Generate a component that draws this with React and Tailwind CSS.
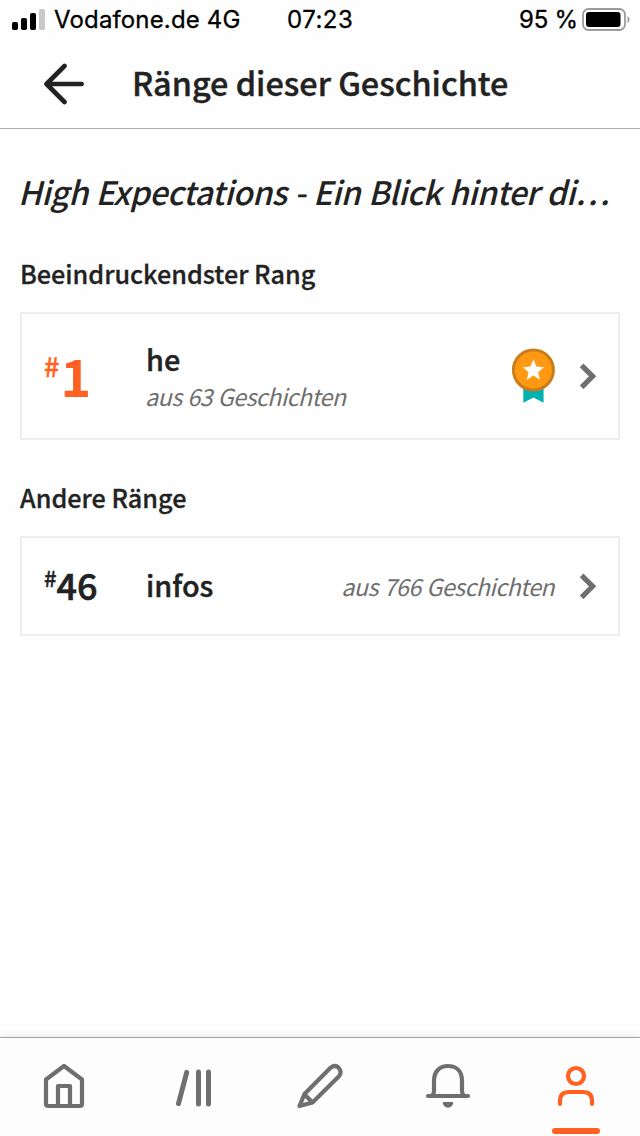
import React from 'react';

const Chevron = () => (
  <svg width="18" height="26" viewBox="0 0 18 26" fill="none" className="shrink-0">
    <path d="M2.6 2.3 L13.6 13.3 L2.6 24.3" stroke="#6f6f6f" strokeWidth="5.2" />
  </svg>
);

const Medal = () => (
  <svg width="44" height="56" viewBox="0 0 44 56" className="shrink-0">
    <path d="M12.3 36h20.3v18.8l-10.2-5.4-10.1 5.4z" fill="#00b2b2" />
    <circle cx="22.4" cy="22" r="20" fill="#ff9912" stroke="#c97e1b" strokeWidth="3" />
    <path
      d="M22.4 11.3l3 7.3 7.6.6-5.8 5 1.8 7.5-6.6-4.1-6.6 4.1 1.8-7.5-5.8-5 7.6-.6z"
      fill="#fff"
    />
  </svg>
);

const StatusBar = () => (
  <div className="flex h-10 items-center pl-3 pr-2.5 font-['Inter',sans-serif] text-[24px] leading-none text-black [-webkit-text-stroke:0.3px]">
    <svg width="34" height="22" viewBox="0 0 34 22" className="shrink-0">
      <rect x="0" y="13" width="6" height="8" rx="1.8" />
      <rect x="9" y="9" width="6" height="12" rx="1.8" />
      <rect x="18" y="4" width="6" height="17" rx="1.8" />
      <rect x="27" y="0" width="6" height="21" rx="1.8" fill="#c9c9c9" />
    </svg>
    <span className="ml-2 w-[233px] whitespace-nowrap tracking-[0.15px]">Vodafone.de 4G</span>
    <span className="w-[232px] whitespace-nowrap tracking-[0.5px]">07:23</span>
    <span className="w-[63px] whitespace-nowrap tracking-[-0.2px]">95 %</span>
    <svg width="48" height="24" viewBox="0 0 48 24" className="shrink-0">
      <rect x="1" y="1" width="42" height="21" rx="5.5" fill="none" stroke="#9b9b9b" strokeWidth="1.8" />
      <rect x="4" y="4" width="34.5" height="15" rx="3" />
      <path d="M45.5 8q2 1 2 3.5t-2 3.5z" fill="#9b9b9b" />
    </svg>
  </div>
);

const Header = () => (
  <header className="flex h-[89px] items-center border-b border-[#adadad] pl-[43px]">
    <svg width="42" height="42" viewBox="0 0 42 42" fill="none" className="shrink-0">
      <path
        d="M21.5 3L3.5 21 21.5 39M3.5 21H38.7"
        stroke="#222"
        strokeWidth="4.6"
        strokeLinecap="round"
        strokeLinejoin="round"
      />
    </svg>
    <h1 className="-mt-1 ml-[47px] whitespace-nowrap text-[32.4px] font-medium leading-none [-webkit-text-stroke:0.4px]">
      Ränge dieser Geschichte
    </h1>
  </header>
);

const navItems = [
  {
    name: 'home',
    icon: (
      <>
        <path d="M22 4L40 17.5V42Q40 44 38 44H6Q4 44 4 42V17.5Z" />
        <path d="M16 44V24H28V44" />
      </>
    ),
  },
  {
    name: 'library',
    icon: <path d="M16.7 10.3L8.5 41.7M28.5 10V42M38.5 10V42" strokeWidth="5" />,
  },
  {
    name: 'write',
    icon: (
      <>
        <path d="M6.5 32L32.5 5.8Q37 2.3 40.7 5.8Q44.5 10.2 40.7 14.5L14.5 40.5L1.5 44Z" />
        <path d="M6.5 32.5L14 40" />
      </>
    ),
  },
  {
    name: 'notifications',
    icon: (
      <>
        <path d="M2 34H42M6 34Q8 32 8 29V19C8 9 14 4 22 4S36 9 36 19V29Q36 32 38 34" />
        <path d="M18 40H26Q28 40 27 42Q25.3 45.8 22 45.8T17 42Q16 40 18 40Z" fill="#6f6f6f" stroke="none" />
      </>
    ),
  },
  {
    name: 'profile',
    active: true,
    icon: (
      <>
        <circle cx="22" cy="14" r="8" />
        <path d="M6 42V39Q6 30 15 30H29Q38 30 38 39V42" />
      </>
    ),
  },
];

const BottomNav = () => (
  <nav className="mt-auto grid h-[99px] shrink-0 grid-cols-5 border-t border-[#a3a3a3] bg-[#fdfdfd] shadow-[0_-1px_8px_rgba(0,0,0,0.1)]">
    {navItems.map(({ name, icon, active }) => (
      <div key={name} className="flex flex-col items-center justify-between pt-6">
        <svg
          width="44"
          height="48"
          viewBox="0 0 44 48"
          fill="none"
          stroke={active ? '#ff6122' : '#6f6f6f'}
          strokeWidth="4.2"
          strokeLinecap="round"
          strokeLinejoin="round"
          className="overflow-visible"
        >
          {icon}
        </svg>
        {active && <div className="mb-0.5 h-1.5 w-12 rounded-full bg-[#ff6122]" />}
      </div>
    ))}
  </nav>
);

export default function App() {
  return (
    <div className="flex h-[1136px] w-[640px] flex-col overflow-hidden bg-[#fefefe] font-['Noto_Sans_CJK_JP',sans-serif] text-[#222]">
      <StatusBar />
      <Header />
      <main className="px-5">
        <h2 className="-ml-0.5 mt-11 whitespace-nowrap text-[32.2px] font-medium italic leading-9 tracking-[-0.5px] [word-spacing:1px]">
          High Expectations - Ein Blick hinter di…
        </h2>

        <h3 className="mt-12 whitespace-nowrap text-[25.2px] font-medium leading-8 [-webkit-text-stroke:0.3px]">
          Beeindruckendster Rang
        </h3>
        <div className="mt-[23px] flex h-32 items-center border-2 border-[#eee] bg-white pl-[22px] pr-[21px]">
          <div className="-mt-[3px] flex w-[102px] items-start text-[#ff6122]">
            <span className="mt-[5px] text-[27px] font-medium leading-none [-webkit-text-stroke:0.4px]">#</span>
            <span className="ml-px text-[52px] font-bold leading-[56px]">1</span>
          </div>
          <div className="flex-1 whitespace-nowrap">
            <p className="text-[28.8px] font-medium leading-9 [-webkit-text-stroke:0.4px]">he</p>
            <p className="-ml-px mt-[3px] text-[23.4px] italic leading-8 tracking-[-0.6px] text-[#6f6f6f] [word-spacing:1px]">
              aus 63 Geschichten
            </p>
          </div>
          <Medal />
          <div className="ml-6">
            <Chevron />
          </div>
        </div>

        <h3 className="mt-[41px] whitespace-nowrap text-[25.2px] font-medium leading-8 [-webkit-text-stroke:0.3px]">
          Andere Ränge
        </h3>
        <div className="mt-[23px] flex h-[100px] items-center border-2 border-[#eee] bg-white pl-[22px] pr-[21px]">
          <div className="-mt-1 flex w-[102px] items-start">
            <span className="mt-px text-[22px] font-medium leading-6 [-webkit-text-stroke:0.4px]">#</span>
            <span className="text-[36px] font-medium leading-10 [-webkit-text-stroke:0.6px]">46</span>
          </div>
          <p className="-mt-[3px] flex-1 text-[28.8px] font-medium leading-9 [-webkit-text-stroke:0.4px]">infos</p>
          <p className="mr-[25px] whitespace-nowrap text-[23.4px] italic leading-8 tracking-[-0.6px] text-[#6f6f6f] [word-spacing:1px]">
            aus 766 Geschichten
          </p>
          <Chevron />
        </div>
      </main>
      <BottomNav />
    </div>
  );
}
